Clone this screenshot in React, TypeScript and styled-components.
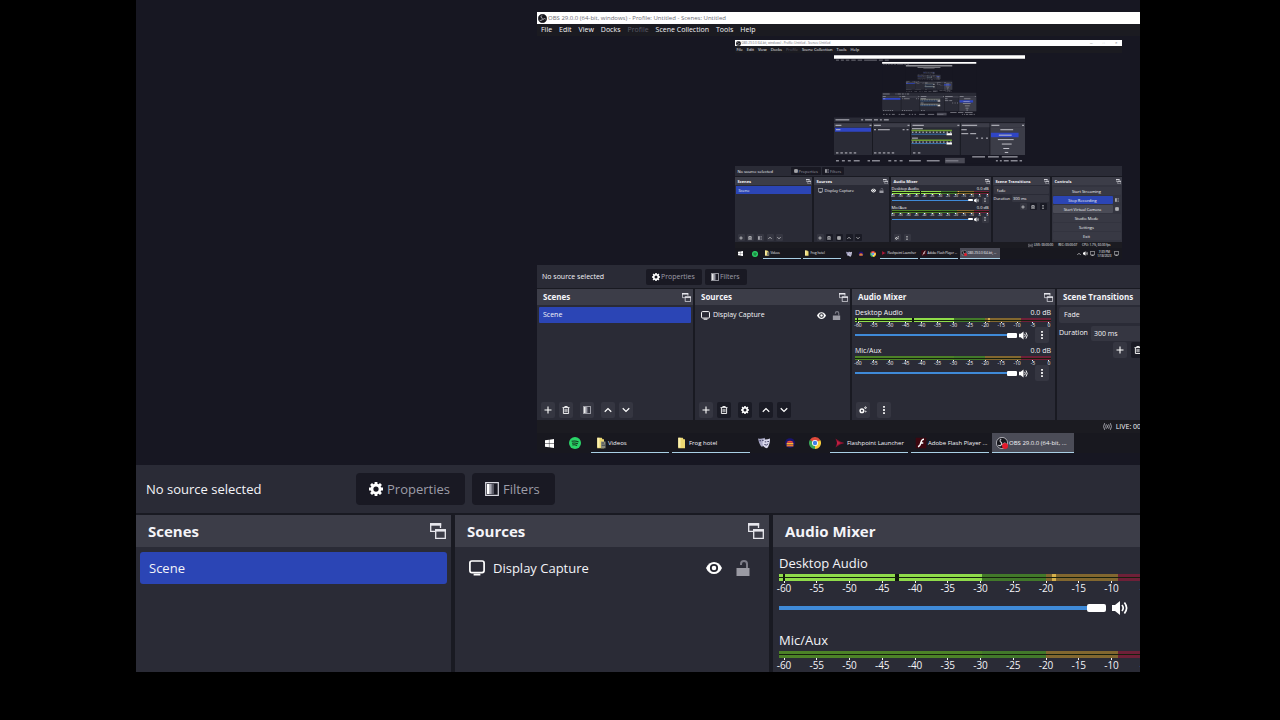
import React from "react";
import styled, { createGlobalStyle, css, ThemeProvider } from "styled-components";

/* Each nested capture shows the same program at half the size of the one around it. */
type Depth = 0 | 1 | 2;
type Themed = { theme: { depth?: Depth } };

const at =
  (outer: number, middle: number, inner: number) =>
  ({ theme }: Themed) =>
    `${[outer, middle, inner][theme.depth ?? 0]}px`;

const GlobalStyle = createGlobalStyle`
  * { box-sizing: border-box; }
  body {
    margin: 0;
    background: #000;
    font-family: "Open Sans", "Noto Sans", sans-serif;
    color: #f4f4f8;
  }
  button, input, select {
    font: inherit;
    color: inherit;
    border: 0;
    margin: 0;
    padding: 0;
  }
  svg { display: block; flex: none; }
`;

/* ---------- page frame ---------- */

const Page = styled.main`
  height: 100vh;
  padding: 0 140px 48px 136px;
  display: flex;
`;

const Stage = styled.div`
  flex: 1;
  min-width: 0;
  overflow: hidden;
  background: #171722;
`;

const Screen = styled.div`
  width: ${at(1588, 786, 387)};
  flex: none;
  display: flex;
  flex-direction: column;
  background: #191a22;
  font-size: ${at(13, 7, 4)};
  line-height: ${at(20, 10, 5)};
  white-space: nowrap;
`;

const TitleBar = styled.header`
  height: ${at(24, 12, 6)};
  padding: 0 ${at(4, 1, 1)};
  display: flex;
  align-items: center;
  gap: ${at(4, 1, 1)};
  background: #fff;
  color: #6c6c74;
  font-size: ${at(12, 6, 3)};
  line-height: ${at(24, 12, 6)};
`;

const WindowControls = styled.span`
  margin-left: auto;
  display: flex;
  gap: ${at(40, 20, 10)};
  padding-right: ${at(12, 6, 3)};
`;

const MenuBar = styled.nav`
  height: ${at(24, 12, 7)};
  padding-left: ${at(8, 4, 2)};
  display: flex;
  align-items: center;
  gap: ${at(14, 7, 4)};
  background: #1b1b21;
  line-height: ${at(24, 12, 7)};
`;

const MenuButton = styled.button<{ $dim?: boolean }>`
  background: none;
  color: ${(p) => (p.$dim ? "#5d5d68" : "#f4f4f8")};
`;

const Preview = styled.section`
  padding: ${at(12, 4, 2)} ${at(0, 4, 0)} ${at(12, 6, 2)} ${at(0, 0, 2)};
  display: flex;
  justify-content: center;
  background: #171722;
`;

/* ---------- source toolbar ---------- */

const SourceBar = styled.section`
  height: ${at(48, 23, 10)};
  margin-bottom: ${at(2, 1, 1)};
  padding-left: ${at(10, 5, 3)};
  display: flex;
  align-items: center;
  gap: ${at(7, 3, 1)};
  background: #2a2b36;
`;

const SourceName = styled.span`
  width: ${at(203, 101, 52)};
`;

const BarButton = styled.button`
  height: ${at(32, 16, 8)};
  padding: 0 ${at(15, 7, 3)} 0 ${at(13, 6, 3)};
  display: flex;
  align-items: center;
  gap: ${at(4, 1, 1)};
  border-radius: ${at(4, 2, 1)};
  background: #191923;
  color: #9d9da8;
`;

/* ---------- docks ---------- */

const Docks = styled.div`
  height: ${at(264, 131, 65)};
  display: flex;
  gap: ${at(4, 2, 2)};
`;

const dockWidths = {
  scenes: at(315, 156, 77),
  sources: at(314, 155, 75),
  mixer: at(416, 203, 100),
  transitions: at(232, 116, 57),
  controls: at(292, 147, 70),
};

const DockFrame = styled.section<{ $kind: keyof typeof dockWidths }>`
  width: ${(p) => dockWidths[p.$kind](p)};
  flex: none;
  display: flex;
  flex-direction: column;
  background: ${(p) => (p.$kind === "controls" ? "#33343f" : "#2a2b36")};
  overflow: hidden;
`;

const DockHeader = styled.header`
  height: ${at(32, 16, 8)};
  flex: none;
  padding: 0 ${at(5, 2, 1)} 0 ${at(12, 6, 3)};
  display: flex;
  align-items: center;
  justify-content: space-between;
  background: #3c3d48;
`;

const DockTitle = styled.h2`
  margin: 0;
  font-size: ${at(15, 8, 4)};
  font-weight: 700;
`;

const IconButton = styled.button`
  background: none;
  display: flex;
`;

const ItemRow = styled.div<{ $selected?: boolean; $icon?: boolean }>`
  height: ${at(32, 16, 8)};
  margin: ${at(5, 2, 1)} ${at(4, 2, 1)} 0;
  padding: 0 ${at(14, 7, 4)} 0 ${(p) => (p.$icon ? at(10, 4, 3)(p) : at(9, 4, 3)(p))};
  display: flex;
  align-items: center;
  border-radius: ${at(3, 1, 0)};
  ${(p) => p.$selected && css`background: #2b45b5;`}
`;

const ItemLabel = styled.span`
  flex: 1;
  padding-left: ${at(8, 3, 2)};
`;

const SourceToggles = styled.span`
  display: flex;
  gap: ${at(13, 6, 3)};
`;

const DockToolbar = styled.div`
  margin-top: auto;
  padding: 0 ${at(8, 4, 3)} ${at(4, 2, 1)};
  display: flex;
  gap: ${at(6, 4, 2)};
`;

const ToolButton = styled.button<{ $dark?: boolean; $apart?: boolean }>`
  width: ${at(30, 14, 7)};
  height: ${at(30, 16, 7)};
  margin-left: ${(p) => (p.$apart ? at(6, 3, 1)(p) : 0)};
  display: flex;
  align-items: center;
  justify-content: center;
  flex: none;
  border-radius: ${at(4, 2, 1)};
  background: ${(p) => (p.$dark ? "#1a1b25" : "#353641")};
`;

/* ---------- audio mixer ---------- */

const Channels = styled.div`
  padding: ${at(6, 3, 1)} ${at(9, 4, 2)} 0 ${at(6, 3, 1)};
`;

const Channel = styled.div`
  margin-bottom: ${at(8, 4, 2)};
`;

const ChannelHead = styled.div`
  height: ${at(21, 10, 5)};
  display: flex;
  justify-content: space-between;
`;

const Meter = styled.div<{ $live: boolean }>`
  height: ${at(7, 4, 3)};
  background:
    linear-gradient(#16200f, #16200f) 0 50% / 100% 1px no-repeat,
    ${(p) =>
      p.$live
        ? `linear-gradient(90deg, transparent 1%, #10180c 1%, #10180c 1.4%, transparent 1.4%, transparent 29%,
           #10180c 29%, #10180c 30%, transparent 30%, transparent 68%, #d6b04a 68%, #d6b04a 69%, transparent 69%),`
        : ""}
    linear-gradient(90deg,
      ${(p) => (p.$live ? "#8fdc4a" : "#4c8227")} 50.5%,
      #42792a 50.5%, #42792a 66.5%,
      #82672f 66.5%, #82672f 84.5%,
      #6e2038 84.5%);
`;

const Scale = styled.div`
  height: ${at(13, 6, 3)};
  padding: 0 ${at(3, 2, 1)} 0 ${at(5, 3, 1)};
  display: flex;
  justify-content: space-between;
  font-size: ${at(10, 5, 3)};
  line-height: ${at(11, 5, 2)};
`;

const Tick = styled.span`
  width: 0;
  display: flex;
  flex-direction: column;
  align-items: center;
  &::before {
    content: "";
    width: ${at(1, 1, 1)};
    height: ${at(2, 1, 1)};
    flex: none;
    background: #f4f4f8;
  }
`;

const VolumeRow = styled.div`
  height: ${at(28, 14, 6)};
  padding-right: ${at(2, 2, 0)};
  display: flex;
  align-items: center;
`;

const thumb = css`
  appearance: none;
  width: ${at(19, 10, 5)};
  height: ${at(8, 5, 2)};
  border: 0;
  border-radius: ${at(2, 1, 1)};
  background: #fff;
`;

const Slider = styled.input`
  appearance: none;
  flex: 1;
  min-width: 0;
  height: ${at(8, 5, 2)};
  background: linear-gradient(#3f8ad8, #3f8ad8) 0 50% / 100% ${at(4, 2, 1)} no-repeat;
  &::-webkit-slider-thumb { ${thumb} }
  &::-moz-range-thumb { ${thumb} }
`;

const Speaker = styled.button`
  margin: 0 ${at(20, 7, 3)} 0 ${at(6, 2, 1)};
  background: none;
`;

/* ---------- transitions and controls ---------- */

const TransitionSelect = styled.select`
  appearance: none;
  height: ${at(32, 16, 8)};
  margin: ${at(5, 2, 1)} ${at(4, 2, 1)} 0;
  padding-left: ${at(10, 5, 3)};
  border-radius: ${at(4, 2, 1)};
  background: #353641;
`;

const DurationRow = styled.div`
  height: ${at(32, 16, 7)};
  margin: ${at(4, 2, 1)} ${at(4, 2, 1)} ${at(4, 1, 1)} ${at(2, 2, 1)};
  display: flex;
  align-items: center;
  gap: ${at(8, 3, 2)};
`;

const DurationInput = styled.input`
  flex: 1;
  min-width: 0;
  height: ${at(30, 15, 7)};
  padding-left: ${at(6, 3, 1)};
  border-radius: ${at(4, 2, 1)};
  background: #353641;
`;

const TransitionTools = styled.div`
  padding-right: ${at(4, 10, 3)};
  display: flex;
  justify-content: flex-end;
  gap: ${at(8, 4, 3)};
`;

const ControlList = styled.div`
  padding: ${at(8, 4, 2)} ${at(4, 2, 1)};
  display: grid;
  grid-template-columns: 1fr ${at(24, 12, 7)};
  gap: ${at(4, 2, 1)};
`;

const ControlButton = styled.button<{ $tone?: "active" | "light"; $wide?: boolean }>`
  grid-column: ${(p) => (p.$wide ? "1 / -1" : "1")};
  height: ${at(32, 16, 8)};
  border-radius: ${at(4, 2, 1)};
  background: ${(p) => (p.$tone === "active" ? "#2b45b5" : p.$tone === "light" ? "#4a4b56" : "#383944")};
`;

const StatusBar = styled.footer`
  height: ${at(24, 13, 6)};
  padding-right: ${at(44, 22, 11)};
  display: flex;
  align-items: center;
  justify-content: flex-end;
  gap: ${at(20, 15, 5)};
  background: #1b1b21;
  font-size: ${at(13, 7, 3)};
`;

const StatusItem = styled.span`
  display: flex;
  align-items: center;
  gap: ${at(8, 4, 1)};
`;

/* ---------- desktop taskbar ---------- */

const TaskBar = styled.footer`
  height: ${at(40, 20, 11)};
  padding: 0 ${at(16, 8, 3)} 0 ${at(15, 8, 3)};
  display: flex;
  background: #18181f;
`;

const TaskIcon = styled.button`
  display: flex;
  align-items: center;
  background: none;
`;

const Launchers = styled.div<{ $middle?: boolean }>`
  width: ${(p) => (p.$middle ? at(160, 77, 37)(p) : at(94, 46, 25)(p))};
  padding: 0 ${(p) => (p.$middle ? at(16, 9, 4)(p) : at(20, 10, 5)(p))} 0 ${(p) =>
  p.$middle ? at(10, 5, 3)(p) : 0};
  flex: none;
  display: flex;
  justify-content: space-between;
`;

const TaskButton = styled.button<{ $active?: boolean }>`
  width: ${(p) => (p.$active ? at(164, 82, 40)(p) : at(156, 78, 38)(p))};
  margin-right: ${at(6, 3, 2)};
  padding-left: ${at(8, 4, 1)};
  flex: none;
  display: flex;
  align-items: center;
  gap: ${at(4, 1, 1)};
  border-bottom: ${at(2, 1, 1)} solid #a9cfe4;
  background: ${(p) => (p.$active ? "#4b4c57" : "none")};
  font-size: ${at(12, 6, 3)};
`;

const Tray = styled.div`
  margin-left: auto;
  display: flex;
  align-items: center;
  gap: ${at(8, 4, 2)};
`;

const Clock = styled.time`
  font-size: ${at(12, 6, 3)};
  line-height: ${at(16, 8, 4)};
  text-align: center;
`;

/* ---------- icons ---------- */

const Glyph = styled.svg.attrs({ "aria-hidden": true })`
  width: ${at(16, 9, 5)};
  height: ${at(16, 9, 5)};
`;

const SmallGlyph = styled(Glyph)`
  width: ${at(14, 8, 4)};
  height: ${at(14, 8, 4)};
`;

const TaskGlyph = styled(Glyph)`
  width: ${at(24, 12, 6)};
  height: ${at(24, 12, 6)};
`;

const PopOutIcon = () => (
  <Glyph viewBox="0 0 16 16" fill="none" stroke="#e8e8ee">
    <path d="M10.500 5V1H.7v7.300H5" strokeWidth="1.300" />
    <path d="M0 1.400h11.200" strokeWidth="2.600" />
    <path d="M5.700 7h9.600v8.300H5.700z" strokeWidth="1.300" />
    <path d="M5 7.400h11" strokeWidth="2.400" />
  </Glyph>
);

const GearIcon = () => (
  <SmallGlyph viewBox="0 0 16 16">
    <circle cx="8" cy="8" r="4.600" fill="none" stroke="#fff" strokeWidth="3.200" />
    <path
      d="M8 0v3M8 13v3M0 8h3M13 8h3M2.300 2.300l2.100 2.100M11.600 11.600l2.100 2.100M2.300 13.700l2.100-2.100M11.600 4.400l2.100-2.100"
      stroke="#fff"
      strokeWidth="3.200"
    />
  </SmallGlyph>
);

const FilterIcon = () => (
  <SmallGlyph viewBox="0 0 16 16">
    <path d="M.8.8h14.400v14.400H.8z" fill="none" stroke="#d8d8e0" strokeWidth="1.400" />
    <path d="M2.200 2.200h3.200v11.600H2.200z" fill="#fff" />
    <path d="M5.400 2.200h2.400v11.600H5.400z" fill="#a9a9b4" />
    <path d="M7.800 2.200h2.400v11.600H7.800z" fill="#5d5d69" />
  </SmallGlyph>
);

const MonitorIcon = () => (
  <Glyph viewBox="0 0 16 16" fill="none" stroke="#fff">
    <rect x=".9" y="1" width="14.200" height="11.600" rx="2" strokeWidth="1.700" />
    <path d="M4.600 14.600h6.800" strokeWidth="1.800" />
  </Glyph>
);

const EyeIcon = () => (
  <Glyph viewBox="0 0 16 16">
    <path d="M0 8C1.800 4 4.600 2 8 2s6.200 2 8 6c-1.800 4-4.600 6-8 6S1.800 12 0 8z" fill="#fff" />
    <circle cx="8" cy="8" r="3.200" fill="none" stroke="#23242e" strokeWidth="1.800" />
  </Glyph>
);

const LockIcon = () => (
  <Glyph viewBox="0 0 16 16">
    <path d="M1.500 8h13v8h-13z" fill="#9a9aa3" />
    <path d="M12 8V4a3 3 0 0 0-6 0v1" fill="none" stroke="#7d7d88" strokeWidth="2" />
  </Glyph>
);

const SpeakerIcon = () => (
  <Glyph viewBox="0 0 16 16">
    <path d="M0 5h3l5-4v14l-5-4H0z" fill="#fff" />
    <path d="M10 5q2.400 3 0 6M12.400 2.500q4.400 5.500 0 11" fill="none" stroke="#fff" strokeWidth="1.700" />
  </Glyph>
);

const PlusIcon = () => (
  <SmallGlyph viewBox="0 0 16 16" stroke="#fff" strokeWidth="2.200">
    <path d="M8 1v14M1 8h14" />
  </SmallGlyph>
);

const TrashIcon = () => (
  <SmallGlyph viewBox="0 0 16 16" fill="none" stroke="#fff" strokeWidth="1.800">
    <path d="M1 3.200h14M5.500 3V1h5v2M2.800 4v11h10.400V4M6.200 6v6.500M9.800 6v6.500" />
  </SmallGlyph>
);

const ChevronIcon = ({ up }: { up?: boolean }) => (
  <SmallGlyph viewBox="0 0 16 16" fill="none" stroke="#fff" strokeWidth="2.400">
    <path d={up ? "M1.500 11.500 8 5l6.500 6.500" : "M1.500 4.500 8 11l6.500-6.500"} />
  </SmallGlyph>
);

const KebabIcon = () => (
  <SmallGlyph viewBox="0 0 16 16" fill="#fff">
    <path d="M6.300 0h3.400v3.600H6.300zM6.300 6.200h3.400v3.600H6.300zM6.300 12.400h3.400V16H6.300z" />
  </SmallGlyph>
);

const CogsIcon = () => (
  <SmallGlyph viewBox="0 0 16 16" fill="none" stroke="#fff">
    <circle cx="5.800" cy="9.600" r="3.600" strokeWidth="3" />
    <circle cx="13" cy="3.400" r="1.600" strokeWidth="2" />
    <circle cx="13.400" cy="11" r="1" strokeWidth="1.500" />
  </SmallGlyph>
);

const BroadcastIcon = () => (
  <Glyph viewBox="0 0 16 16" fill="none" stroke="#b4b4bc" strokeWidth="1.500">
    <path d="M3 2q-4 6 0 12M6 4q-2.500 4 0 8M13 2q4 6 0 12M10 4q2.500 4 0 8M8 6v4" />
  </Glyph>
);

const ObsIcon = ({ recording }: { recording?: boolean }) => {
  const Box = recording ? TaskGlyph : Glyph;
  return (
    <Box viewBox="0 0 16 16">
      <circle cx="8" cy="8" r="7.500" fill="#16161c" stroke={recording ? "#cfcfd6" : "#16161c"} />
      <path
        d="M7 2.500C4.500 4 5 7 8 7.500M13.500 9C11 7 9 9 8.500 11M3 11c3 1.500 5-.5 4.500-3"
        fill="none"
        stroke="#c9c9d0"
        strokeWidth="1.500"
      />
      {recording && <circle cx="12" cy="12" r="4" fill="#e31b2d" />}
    </Box>
  );
};

const WindowsIcon = () => (
  <Glyph viewBox="0 0 16 16" fill="#fff">
    <path d="M0 2.300 7 1.300v6.200H0zM7.700 1.200 16 0v7.500H7.700zM0 8.300h7v6.300l-7-1zM7.700 8.300H16V16l-8.300-1.200z" />
  </Glyph>
);

const SpotifyIcon = () => (
  <TaskGlyph viewBox="0 0 16 16">
    <circle cx="8" cy="8" r="8" fill="#2ad568" />
    <path
      d="M3.500 5.800q5-1.500 9.200.8M4 8.400q4.200-1.200 7.800.7M4.500 10.800q3.300-.9 6.300.6"
      fill="none"
      stroke="#14361f"
      strokeWidth="1.400"
    />
  </TaskGlyph>
);

const FolderIcon = ({ stacked }: { stacked?: boolean }) => (
  <TaskGlyph viewBox="0 0 16 16">
    <path d="M3 1h6l1 2h2v12H3z" fill="#ecd873" />
    <path d="M3 1h3v13H3z" fill="#fbf0ae" />
    {stacked && <path d="M8 6h6v9H8z" fill="#8b8a7a" />}
    {stacked && <path d="M9 8h3M9 11h5" stroke="#3c4650" strokeWidth="1.500" />}
  </TaskGlyph>
);

const MasksIcon = () => (
  <TaskGlyph viewBox="0 0 16 16">
    <path d="M0 2q5 1 9-1l1 7q-2 5-5 5-3-2-5-11z" fill="#a9a8c6" />
    <path d="M7 3q4 1 9-1 0 9-4 13-5-1-6-6z" fill="#d9d8ec" />
    <path
      d="M2 5h2M5.500 4.500h2M9 6.500h2M12.500 6h2M8.500 10q3 2 5-1"
      fill="none"
      stroke="#37365a"
      strokeWidth="1.300"
    />
  </TaskGlyph>
);

const SunsetIcon = () => (
  <TaskGlyph viewBox="0 0 16 16">
    <circle cx="8" cy="8" r="6.500" fill="#1a1370" />
    <path d="M3.500 7.500Q4 5 8 5t4.500 2.500z" fill="#f04e3c" />
    <path d="M3.500 8h9v2h-9z" fill="#ffb62e" />
    <path d="M3.500 10.400h9v2.200h-9z" fill="#ef7b2d" />
  </TaskGlyph>
);

const ChromeIcon = () => (
  <TaskGlyph viewBox="0 0 16 16">
    <path d="M8 8 1.070 4A8 8 0 0 1 14.930 4z" fill="#e04a3b" />
    <path d="M8 8 14.930 4A8 8 0 0 1 8 16z" fill="#f7cb3a" />
    <path d="M8 8V16A8 8 0 0 1 1.070 4z" fill="#3aa457" />
    <circle cx="8" cy="8" r="4" fill="#fff" />
    <circle cx="8" cy="8" r="2.900" fill="#3f7ee8" />
  </TaskGlyph>
);

const FlashpointIcon = () => (
  <TaskGlyph viewBox="0 0 16 16">
    <path d="M2 2l6 4 6 2-6 2-6 4 2-6z" fill="#8c1230" />
    <path d="M4 5l5 3-5 3z" fill="#c01f42" />
  </TaskGlyph>
);

const FlashPlayerIcon = () => (
  <TaskGlyph viewBox="0 0 16 16">
    <path d="M1 1h14v14H1z" fill="#3d0710" />
    <path d="M12 3q-3 0-4 4-1 5-4 6M7 8h4" fill="none" stroke="#fff" strokeWidth="1.800" />
  </TaskGlyph>
);

/* ---------- deepest captures: too small for text, drawn as a picture ---------- */

const Thumbnail = styled.svg`
  width: 191px;
  height: 109px;
`;

const dashes = (x: number, y: number, widths: number[], gap = 4) =>
  widths.map((w, i) => {
    const left = x + widths.slice(0, i).reduce((sum, v) => sum + v + gap, 0);
    return <rect key={i} x={left} y={y} width={w} height="2" />;
  });

const ThumbnailLayer = ({ level }: { level: number }) => (
  <g>
    <path d="M0 0h387v219H0z" fill="#171722" />
    <path d="M0 0h387v7H0z" fill="#fff" />
    <g fill="#6f6f79">{dashes(4, 9, [6, 6, 7, 9, 9, 26, 8, 8])}</g>
    <path d="M0 126h387v76H0z" fill="#2a2b36" />
    <path d="M0 136h387v1.500H0zM77 137h2v65h-2zM154 137h2v65h-2zM255 137h2v65h-2zM315 137h2v65h-2z" fill="#191a22" />
    <path d="M0 138h77v8H0zM79 138h75v8H79zM156 138h99v8H156zM257 138h58v8H257zM317 138h70v8H317z" fill="#3c3d48" />
    <path d="M317 146h70v56H317z" fill="#3c3d48" />
    <path d="M2 147h73v8H2zM318 157h56v9H318z" fill="#2f45c4" />
    <g fill="#c4c4cc">
      {dashes(3, 130, [28])}
      {dashes(55, 130, [4, 14, 8, 4, 10], 4)}
      {dashes(3, 141, [12])}
      {dashes(72, 141, [4])}
      {dashes(81, 141, [14])}
      {dashes(149, 141, [4])}
      {dashes(159, 141, [23])}
      {dashes(250, 141, [4])}
      {dashes(259, 141, [31])}
      {dashes(319, 141, [16])}
      {dashes(381, 141, [4])}
      {dashes(4, 150, [9])}
      {dashes(81, 150, [4, 24])}
      {dashes(139, 150, [4, 4])}
      {dashes(158, 148, [22])}
      {dashes(158, 167, [12])}
      {dashes(258, 150, [11])}
      {dashes(258, 158, [14, 12])}
      {dashes(288, 167, [4, 4, 4], 6)}
      {dashes(337, 150, [26])}
      {dashes(334, 161, [26])}
      {dashes(332, 170, [32])}
      {dashes(340, 179, [20])}
      {dashes(343, 188, [12])}
      {dashes(346, 196, [7])}
      {dashes(4, 197, [5, 5, 5, 5, 5])}
      {dashes(81, 197, [5, 5, 5, 5, 5])}
      {dashes(160, 197, [5, 5], 5)}
      {dashes(280, 205, [26, 22, 32], 6)}
      {dashes(4, 213, [6, 6, 6, 12], 6)}
      {dashes(68, 213, [5, 16])}
      {dashes(110, 213, [6, 5, 6], 6)}
      {dashes(152, 213, [24, 26, 26], 12)}
      {dashes(328, 213, [4, 4, 10, 14, 5])}
    </g>
    <path d="M225 208h40v11h-40z" fill="#6a6b76" opacity=".6" />
    <path d="M157 151h82v3h-82zM157 171h82v3h-82z" fill={level < 1 ? "#6c9c33" : "#8d9389"} />
    <path d="M158 156h84M158 176h84" stroke="#d8d8de" strokeWidth="2" strokeDasharray="3 4" />
    <path d="M157 160h70M157 179h70" stroke="#3f8ad8" strokeWidth="1.500" />
    <path d="M228 158h11v4h-11zM228 177h11v4h-11z" fill="#fff" />
    {level < 4 && (
      <g transform="translate(97.500 14) scale(.493)">
        <ThumbnailLayer level={level + 1} />
      </g>
    )}
  </g>
);

/* ---------- composed parts ---------- */

const Dock = ({
  kind,
  title,
  children,
}: {
  kind: keyof typeof dockWidths;
  title: string;
  children: React.ReactNode;
}) => (
  <DockFrame $kind={kind}>
    <DockHeader>
      <DockTitle>{title}</DockTitle>
      <IconButton aria-label={`Float ${title}`}>
        <PopOutIcon />
      </IconButton>
    </DockHeader>
    {children}
  </DockFrame>
);

const marks = [-60, -55, -50, -45, -40, -35, -30, -25, -20, -15, -10, -5, 0];

const MixerChannel = ({ name, live, depth }: { name: string; live: boolean; depth: Depth }) => {
  const id = `volume-${depth}-${live ? "desktop" : "mic"}`;
  return (
    <Channel>
      <ChannelHead>
        <label htmlFor={id}>{name}</label>
        <span>0.0 dB</span>
      </ChannelHead>
      <Meter $live={live} />
      <Scale>
        {marks.map((m) => (
          <Tick key={m}>{m}</Tick>
        ))}
      </Scale>
      <VolumeRow>
        <Slider id={id} type="range" min={0} max={100} defaultValue={100} />
        <Speaker aria-label={`Mute ${name}`}>
          <SpeakerIcon />
        </Speaker>
        <ToolButton aria-label={`${name} options`}>
          <KebabIcon />
        </ToolButton>
      </VolumeRow>
    </Channel>
  );
};

const ListTools = ({ sources }: { sources?: boolean }) => (
  <DockToolbar>
    <ToolButton aria-label="Add"><PlusIcon /></ToolButton>
    <ToolButton aria-label="Remove" $dark={sources}><TrashIcon /></ToolButton>
    <ToolButton aria-label={sources ? "Source properties" : "Scene filters"} $dark={sources} $apart>
      {sources ? <GearIcon /> : <FilterIcon />}
    </ToolButton>
    <ToolButton aria-label="Move up" $dark={sources} $apart><ChevronIcon up /></ToolButton>
    <ToolButton aria-label="Move down" $dark={sources}><ChevronIcon /></ToolButton>
  </DockToolbar>
);

const menus = ["File", "Edit", "View", "Docks", "Profile", "Scene Collection", "Tools", "Help"];

const WindowTop = ({ depth }: { depth: Depth }) => (
  <>
    <TitleBar>
      <ObsIcon />
      <span>OBS 29.0.0 (64-bit, windows) - Profile: Untitled - Scenes: Untitled</span>
      {depth === 2 && (
        <WindowControls>
          <span>—</span>
          <span>□</span>
          <span>✕</span>
        </WindowControls>
      )}
    </TitleBar>
    <MenuBar>
      {menus.map((m) => (
        <MenuButton key={m} $dim={m === "Profile"}>{m}</MenuButton>
      ))}
    </MenuBar>
  </>
);

const WindowBottom = ({ depth }: { depth: Depth }) => (
  <>
    <StatusBar>
      <StatusItem><BroadcastIcon />LIVE: 00:00:00</StatusItem>
      <StatusItem>REC: 00:00:07</StatusItem>
      <StatusItem>CPU: 1.7%, 60.00 fps</StatusItem>
    </StatusBar>
    <TaskBar>
      <Launchers>
        <TaskIcon aria-label="Start"><WindowsIcon /></TaskIcon>
        <TaskIcon aria-label="Spotify"><SpotifyIcon /></TaskIcon>
      </Launchers>
      <TaskButton><FolderIcon stacked />Videos</TaskButton>
      <TaskButton><FolderIcon />Frog hotel</TaskButton>
      <Launchers $middle>
        <TaskIcon aria-label="Masks"><MasksIcon /></TaskIcon>
        <TaskIcon aria-label="Sunset"><SunsetIcon /></TaskIcon>
        <TaskIcon aria-label="Chrome"><ChromeIcon /></TaskIcon>
      </Launchers>
      <TaskButton><FlashpointIcon />Flashpoint Launcher</TaskButton>
      <TaskButton><FlashPlayerIcon />Adobe Flash Player ...</TaskButton>
      <TaskButton $active><ObsIcon recording />OBS 29.0.0 (64-bit, ...</TaskButton>
      {depth === 2 && (
        <Tray>
          <ChevronIcon up />
          <SpeakerIcon />
          <MonitorIcon />
          <Clock>7:39 PM<br />1/18/2023</Clock>
          <MonitorIcon />
        </Tray>
      )}
    </TaskBar>
  </>
);

const Capture = ({ depth }: { depth: Depth }) => (
  <ThemeProvider theme={{ depth }}>
    <Screen>
      {depth > 0 && <WindowTop depth={depth} />}
      <Preview>
        {depth < 2 ? (
          <Capture depth={(depth + 1) as Depth} />
        ) : (
          <Thumbnail viewBox="0 0 387 220" role="img" aria-label="Nested display capture">
            <ThumbnailLayer level={0} />
          </Thumbnail>
        )}
      </Preview>
      <SourceBar>
        <SourceName>No source selected</SourceName>
        <BarButton><GearIcon />Properties</BarButton>
        <BarButton><FilterIcon />Filters</BarButton>
      </SourceBar>
      <Docks>
        <Dock kind="scenes" title="Scenes">
          <ItemRow $selected>Scene</ItemRow>
          <ListTools />
        </Dock>
        <Dock kind="sources" title="Sources">
          <ItemRow $icon>
            <MonitorIcon />
            <ItemLabel>Display Capture</ItemLabel>
            <SourceToggles>
              <IconButton aria-label="Toggle visibility"><EyeIcon /></IconButton>
              <IconButton aria-label="Toggle lock"><LockIcon /></IconButton>
            </SourceToggles>
          </ItemRow>
          <ListTools sources />
        </Dock>
        <Dock kind="mixer" title="Audio Mixer">
          <Channels>
            <MixerChannel name="Desktop Audio" live depth={depth} />
            <MixerChannel name="Mic/Aux" live={false} depth={depth} />
          </Channels>
          <DockToolbar>
            <ToolButton aria-label="Audio settings"><CogsIcon /></ToolButton>
            <ToolButton aria-label="Mixer menu" $apart><KebabIcon /></ToolButton>
          </DockToolbar>
        </Dock>
        {depth > 0 && (
          <Dock kind="transitions" title="Scene Transitions">
            <TransitionSelect aria-label="Transition" defaultValue="Fade">
              <option>Fade</option>
            </TransitionSelect>
            <DurationRow>
              <label htmlFor={`duration-${depth}`}>Duration</label>
              <DurationInput id={`duration-${depth}`} defaultValue="300 ms" />
            </DurationRow>
            <TransitionTools>
              <ToolButton aria-label="Add transition"><PlusIcon /></ToolButton>
              <ToolButton aria-label="Remove transition" $dark><TrashIcon /></ToolButton>
              <ToolButton aria-label="Transition menu" $dark><KebabIcon /></ToolButton>
            </TransitionTools>
          </Dock>
        )}
        {depth > 1 && (
          <Dock kind="controls" title="Controls">
            <ControlList>
              <ControlButton $wide>Start Streaming</ControlButton>
              <ControlButton $tone="active">Stop Recording</ControlButton>
              <ToolButton aria-label="Pause recording"><FilterIcon /></ToolButton>
              <ControlButton $tone="light">Start Virtual Camera</ControlButton>
              <ToolButton aria-label="Configure virtual camera"><GearIcon /></ToolButton>
              <ControlButton $wide>Studio Mode</ControlButton>
              <ControlButton $wide>Settings</ControlButton>
              <ControlButton $wide>Exit</ControlButton>
            </ControlList>
          </Dock>
        )}
      </Docks>
      {depth > 0 && <WindowBottom depth={depth} />}
    </Screen>
  </ThemeProvider>
);

export default function App() {
  return (
    <>
      <GlobalStyle />
      <Page>
        <Stage>
          <Capture depth={0} />
        </Stage>
      </Page>
    </>
  );
}
